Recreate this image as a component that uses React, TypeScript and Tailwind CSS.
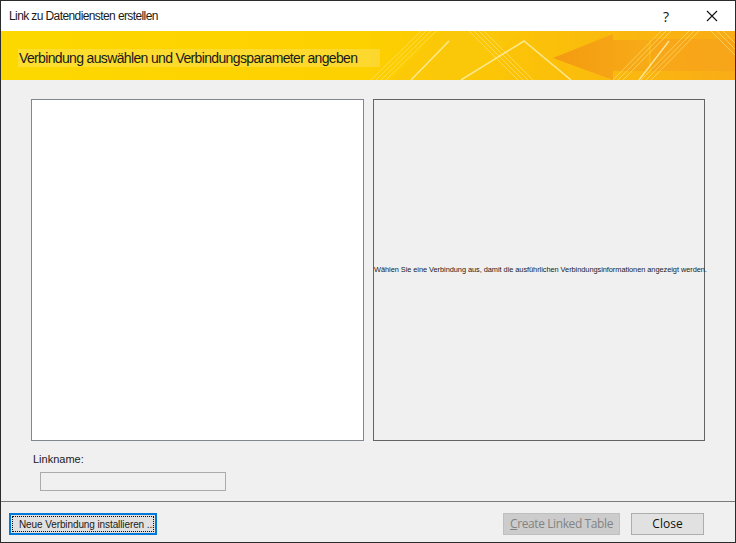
import React from 'react';

function Banner() {
  return (
    <div className="relative h-[49px] w-full overflow-hidden shrink-0">
      <svg className="absolute inset-0" width="734" height="49" viewBox="0 0 734 49">
        <defs>
          <linearGradient id="bg" x1="0" y1="0" x2="1" y2="0">
            <stop offset="0" stopColor="#fdd800" />
            <stop offset="0.5" stopColor="#fdd000" />
            <stop offset="0.75" stopColor="#fbc00a" />
            <stop offset="1" stopColor="#f9ac16" />
          </linearGradient>
          <linearGradient id="arrow" x1="0" y1="0" x2="1" y2="0">
            <stop offset="0" stopColor="#f39612" />
            <stop offset="1" stopColor="#f7aa18" />
          </linearGradient>
        </defs>
        <rect width="734" height="49" fill="url(#bg)" />
        {/* soft diagonal panels */}
        <polygon points="390,49 440,0 520,0 470,49" fill="#fbc80c" opacity="0.7" />
        <polygon points="650,8 734,8 734,40 650,40" fill="#f7a41a" opacity="0.8" />
        {/* left-pointing arrow */}
        <polygon points="552,27 612,3 612,9 648,9 648,40 612,40 612,49" fill="url(#arrow)" opacity="0.9" />
        {/* stripe groups */}
        <g stroke="#ffe680" strokeWidth="1" opacity="0.6">
          <line x1="370" y1="49" x2="420" y2="0" />
          <line x1="375" y1="49" x2="425" y2="0" />
          <line x1="380" y1="49" x2="430" y2="0" />
          <line x1="385" y1="49" x2="435" y2="0" />
          <line x1="468" y1="0" x2="517" y2="49" />
          <line x1="473" y1="0" x2="522" y2="49" />
          <line x1="478" y1="0" x2="527" y2="49" />
          <line x1="483" y1="0" x2="532" y2="49" />
          <line x1="612" y1="49" x2="660" y2="0" />
          <line x1="617" y1="49" x2="665" y2="0" />
          <line x1="622" y1="49" x2="670" y2="0" />
          <line x1="640" y1="49" x2="688" y2="0" />
          <line x1="645" y1="49" x2="693" y2="0" />
          <line x1="650" y1="49" x2="698" y2="0" />
          <line x1="710" y1="0" x2="734" y2="24" />
          <line x1="716" y1="0" x2="734" y2="18" />
          <line x1="722" y1="0" x2="734" y2="12" />
        </g>
        <g stroke="#fff3b0" strokeWidth="1.5" opacity="0.8">
          <polyline points="460,49 523,10 570,49" fill="none" />
          <line x1="638" y1="49" x2="668" y2="10" />
          <line x1="410" y1="49" x2="448" y2="10" />
        </g>
        <rect x="17" y="18" width="362" height="18" fill="#ffffff" opacity="0.18" />
      </svg>
      <div className="absolute left-[18px] top-[18px] text-[14px] leading-[18px] text-[#1a1a1a] tracking-[-0.65px]">
        Verbindung auswählen und Verbindungsparameter angeben
      </div>
    </div>
  );
}

export default function App() {
  return (
    <div className="w-[736px] h-[543px] border border-[#2b2b2b] bg-[#f0f0f0] flex flex-col font-['Liberation_Sans',Arial,sans-serif] overflow-hidden">
      {/* title bar */}
      <div className="h-[30px] bg-white flex items-center shrink-0">
        <div className="pl-[8px] text-[12px] text-[#1a1a1a] tracking-[-0.6px] flex-1">
          Link zu Datendiensten erstellen
        </div>
        <div className="w-[46px] text-center text-[14px] text-[#111] font-['Open_Sans',sans-serif]">?</div>
        <div className="w-[46px] flex justify-center">
          <svg width="12" height="12" viewBox="0 0 12 12">
            <path d="M1 1L11 11M11 1L1 11" stroke="#111" strokeWidth="1.1" />
          </svg>
        </div>
      </div>

      <Banner />

      {/* content */}
      <div className="flex-1 flex flex-col">
        <div className="flex gap-[9px] pl-[30px] pt-[19px]">
          <div className="w-[333px] h-[342px] bg-white border border-[#82878f]" />
          <div className="w-[332px] h-[342px] bg-[#f0f0f0] border border-[#646464] flex items-center">
            <div className="whitespace-nowrap text-[7.4px] text-[#1a1a1a] tracking-[-0.05px]">
              Wählen Sie eine Verbindung aus, damit die ausführlichen Verbindungsinformationen angezeigt werden.
            </div>
          </div>
        </div>

        <div className="pl-[32px] pt-[12px] text-[11px] leading-[13px] text-[#1a1a1a]">Linkname:</div>
        <div className="pl-[39px] pt-[6px]">
          <div className="w-[186px] h-[19px] border border-[#ababab] bg-[#f0f0f0]" />
        </div>

        <div className="mt-[10px] border-t border-[#7a7a7a]" />

        <div className="flex items-center pt-[11px] px-[8px]">
          <div className="w-[148px] h-[22px] border-2 border-[#0078d7] bg-[#e1e1e1] p-[1px]">
            <div className="h-full border border-dotted border-[#111] flex items-center pl-[6px] text-[10px] tracking-[-0.1px] text-[#1a1a1a] whitespace-nowrap">
              Neue Verbindung installieren ...
            </div>
          </div>
          <div className="flex-1" />
          <div className="w-[117px] h-[22px] border border-[#bfbfbf] bg-[#cccccc] flex items-center justify-center text-[12px] text-[#838383] font-['Open_Sans',sans-serif] tracking-[-0.4px]">
            <span><span className="underline">C</span>reate Linked Table</span>
          </div>
          <div className="w-[73px] h-[22px] ml-[11px] mr-[23px] border border-[#adadad] bg-[#e1e1e1] flex items-center justify-center text-[12px] text-[#111] font-['Open_Sans',sans-serif]">
            Close
          </div>
        </div>
      </div>
    </div>
  );
}
